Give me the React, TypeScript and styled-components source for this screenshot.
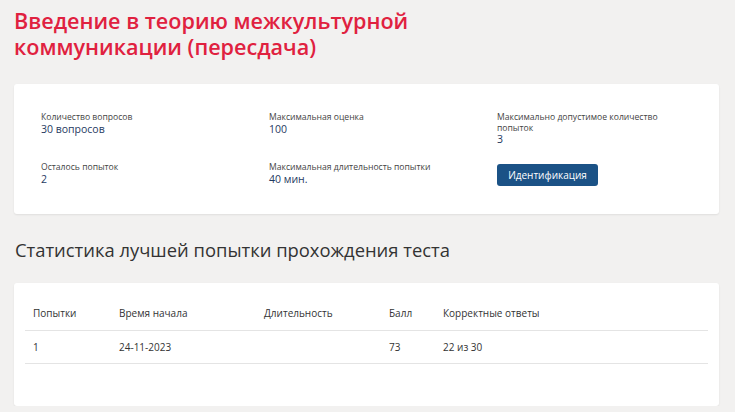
import React from "react";
import styled, { createGlobalStyle } from "styled-components";

const GlobalStyle = createGlobalStyle`
  html, body {
    margin: 0;
    padding: 0;
    background: #f2f1f0;
  }
  body {
    font-family: "Open Sans", "Noto Sans", sans-serif;
    color: #333;
  }
`;

const Page = styled.div`
  padding: 8px 16px 0 14px;
  display: flex;
  flex-direction: column;
`;

const Title = styled.h1`
  margin: 0;
  width: 440px;
  font-family: "Open Sans", sans-serif;
  font-weight: 600;
  font-size: 21.6px;
  line-height: 26px;
  color: #e0213f;
`;

const Card = styled.div<{ $mt: number; $pad: string }>`
  margin-top: ${(p) => p.$mt}px;
  background: #fff;
  border-radius: 3px;
  box-shadow: 0 1px 2px rgba(0, 0, 0, 0.08);
  padding: ${(p) => p.$pad};
`;

const InfoGrid = styled.div`
  display: grid;
  grid-template-columns: 228px 228px 190px;
  row-gap: 17px;
`;

const InfoItem = styled.div`
  display: flex;
  flex-direction: column;
  align-items: flex-start;
`;

const Label = styled.span`
  font-size: 8.6px;
  line-height: 10.5px;
  color: #444;
`;

const Value = styled.span`
  font-size: 10.5px;
  line-height: 12px;
  color: #1f3a5f;
`;

const Button = styled.button`
  margin-top: 2px;
  height: 22px;
  width: 101px;
  border: none;
  border-radius: 3px;
  background: #1b5286;
  color: #fff;
  font-family: "Open Sans", sans-serif;
  font-size: 10px;
  padding: 0;
`;

const Heading = styled.h2`
  margin: 24px 0 0 1px;
  font-family: "Open Sans", sans-serif;
  font-weight: 400;
  font-size: 18.4px;
  line-height: 24px;
  color: #333;
`;

const Table = styled.table`
  width: 100%;
  table-layout: fixed;
  border-collapse: collapse;
  font-size: 10px;
  color: #333;
`;

const Th = styled.th<{ $w?: number }>`
  text-align: left;
  font-weight: 400;
  padding: 0 0 0 8px;
  height: 34px;
  vertical-align: middle;
  border-bottom: 1px solid #e4e4e4;
  width: ${(p) => (p.$w ? `${p.$w}px` : "auto")};
`;

const Td = styled.td`
  padding: 0 0 0 8px;
  height: 32px;
  border-bottom: 1px solid #e4e4e4;
`;

const info = [
  { label: "Количество вопросов", value: "30 вопросов" },
  { label: "Максимальная оценка", value: "100" },
  { label: "Максимально допустимое количество попыток", value: "3" },
  { label: "Осталось попыток", value: "2" },
  { label: "Максимальная длительность попытки", value: "40 мин." },
];

// widths are content widths; each cell adds 8px left padding
const columns = [
  { title: "Попытки", w: 78 },
  { title: "Время начала", w: 137 },
  { title: "Длительность", w: 117 },
  { title: "Балл", w: 46 },
  { title: "Корректные ответы" },
];

const row = ["1", "24-11-2023", "", "73", "22 из 30"];

export default function App() {
  return (
    <>
      <GlobalStyle />
      <Page>
        <Title>Введение в теорию межкультурной коммуникации (пересдача)</Title>
        <Card $mt={24} $pad="28px 27px 28px 27px">
          <InfoGrid>
            {info.map((it) => (
              <InfoItem key={it.label}>
                <Label>{it.label}</Label>
                <Value>{it.value}</Value>
              </InfoItem>
            ))}
            <InfoItem>
              <Button>Идентификация</Button>
            </InfoItem>
          </InfoGrid>
        </Card>
        <Heading>Статистика лучшей попытки прохождения теста</Heading>
        <Card $mt={21} $pad="13px 11px 42px 11px">
          <Table>
            <thead>
              <tr>
                {columns.map((c) => (
                  <Th key={c.title} $w={c.w}>
                    {c.title}
                  </Th>
                ))}
              </tr>
            </thead>
            <tbody>
              <tr>
                {row.map((v, i) => (
                  <Td key={i}>{v}</Td>
                ))}
              </tr>
            </tbody>
          </Table>
        </Card>
      </Page>
    </>
  );
}
